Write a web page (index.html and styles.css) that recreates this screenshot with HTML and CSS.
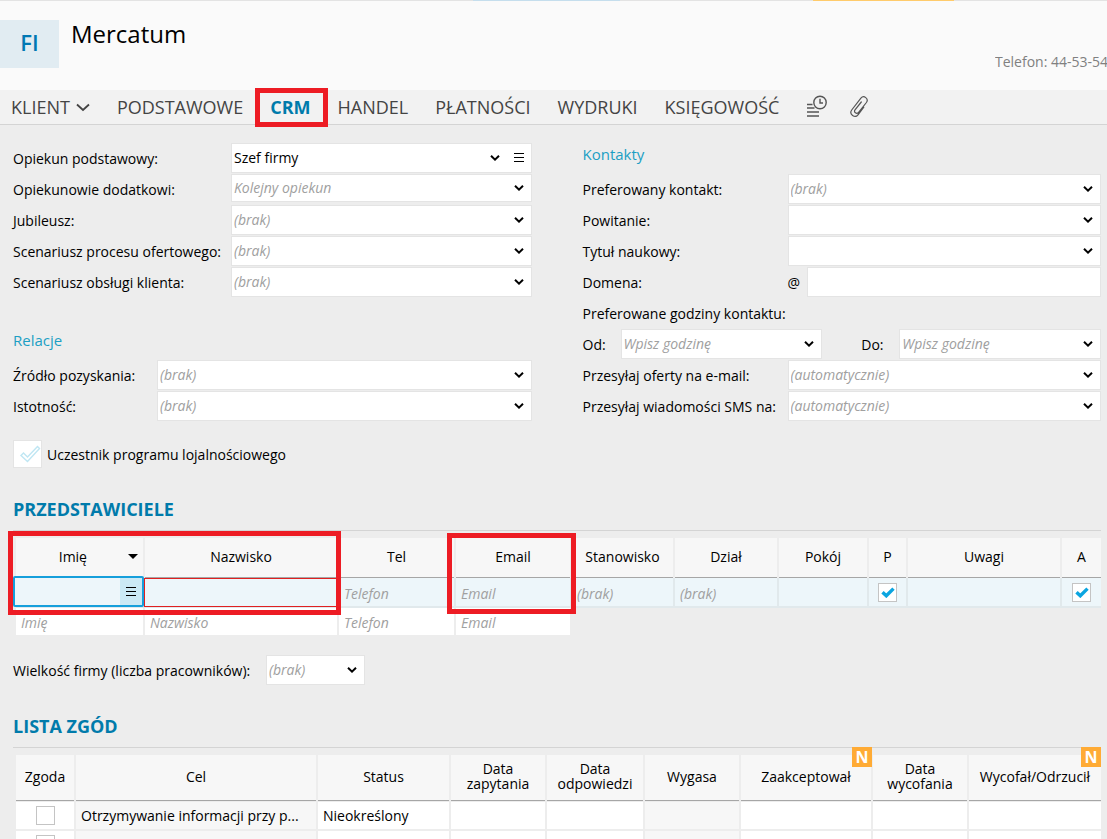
FILE: index.html
```html
<!DOCTYPE html>
<html lang="pl">
<head>
<meta charset="utf-8">
<meta name="viewport" content="width=device-width, initial-scale=1">
<title>Mercatum – CRM</title>
<link rel="stylesheet" href="styles.css">
</head>
<body>
<svg class="defs" aria-hidden="true">
  <symbol id="chev" viewBox="0 0 10 8"><path d="M1 1.8 5 5.6 9 1.8" fill="none" stroke="#000" stroke-width="2"/></symbol>
  <symbol id="menu" viewBox="0 0 10 10"><path d="M0 .5h10M0 4.500h10M0 8.500h10" stroke="#000" stroke-width="1" shape-rendering="crispEdges"/></symbol>
  <symbol id="tick" viewBox="0 0 14 12"><path d="M1.5 6.2 5.3 9.8 12.5 2.6" fill="none" stroke="#0ba5e0" stroke-width="3.4"/></symbol>
</svg>

<div class="strip"><span class="strip-blue"></span><span class="strip-orange"></span></div>
<header class="header">
  <div class="avatar">FI</div>
  <h1 class="name">Mercatum</h1>
  <p class="phone">Telefon: 44-53-54</p>
</header>

<nav class="tabs">
  <button class="tab tab-menu" type="button">KLIENT
    <svg class="tab-chev" viewBox="0 0 14 9"><path d="M1 1.5 7 7 13 1.5" fill="none" stroke="#444" stroke-width="1.8"/></svg>
  </button>
  <a class="tab" href="#">PODSTAWOWE</a>
  <a class="tab tab-active" href="#">CRM</a>
  <a class="tab" href="#">HANDEL</a>
  <a class="tab" href="#">PŁATNOŚCI</a>
  <a class="tab" href="#">WYDRUKI</a>
  <a class="tab" href="#">KSIĘGOWOŚĆ</a>
  <button class="tab-icon" type="button" aria-label="Historia">
    <svg width="22" height="24" viewBox="0 0 22 24" fill="none" stroke="#555" stroke-width="1.4"><circle cx="14" cy="7.500" r="6.2"/><path d="M14 3.8v4.2h3"/><path d="M1 9.500h5.500M1 13h7.500M1 17h12M1 21h12"/></svg>
  </button>
  <button class="tab-icon" type="button" aria-label="Załączniki">
    <svg width="20" height="24" viewBox="0 0 20 24" fill="none" stroke="#555" stroke-width="1.2" stroke-linecap="round"><path d="M14.800 12.200 9 19.800c-3 3.900-9.300-.6-6.300-4.800L11.900 3.200c2.900-3.500 8.200.5 5.500 4.300L9.600 17.300c-1.900 2.300-5.300-.1-3.600-2.500L12.300 7"/></svg>
  </button>
</nav>

<main class="content">
  <div class="columns">
    <section class="col">
      <div class="row"><label class="lbl-wide" for="op">Opiekun podstawowy:</label>
        <div class="pick pick-menu"><select id="op" class="filled"><option>Szef firmy</option></select><svg class="chev"><use href="#chev"/></svg><button class="menu-btn" type="button" aria-label="Menu"><svg class="menu-ic"><use href="#menu"/></svg></button></div></div>
      <div class="row"><label class="lbl-wide" for="od">Opiekunowie dodatkowi:</label>
        <div class="pick pick-low"><select id="od"><option>Kolejny opiekun</option></select><svg class="chev"><use href="#chev"/></svg></div></div>
      <div class="row"><label class="lbl-wide" for="ju">Jubileusz:</label>
        <div class="pick"><select id="ju"><option>(brak)</option></select><svg class="chev"><use href="#chev"/></svg></div></div>
      <div class="row"><label class="lbl-wide" for="so">Scenariusz procesu ofertowego:</label>
        <div class="pick"><select id="so"><option>(brak)</option></select><svg class="chev"><use href="#chev"/></svg></div></div>
      <div class="row"><label class="lbl-wide" for="sk">Scenariusz obsługi klienta:</label>
        <div class="pick"><select id="sk"><option>(brak)</option></select><svg class="chev"><use href="#chev"/></svg></div></div>
      <h2 class="group group-spaced">Relacje</h2>
      <div class="row"><label class="lbl-mid" for="zr">Źródło pozyskania:</label>
        <div class="pick"><select id="zr"><option>(brak)</option></select><svg class="chev"><use href="#chev"/></svg></div></div>
      <div class="row"><label class="lbl-mid" for="is">Istotność:</label>
        <div class="pick"><select id="is"><option>(brak)</option></select><svg class="chev"><use href="#chev"/></svg></div></div>
    </section>

    <section class="col">
      <h2 class="group">Kontakty</h2>
      <div class="row"><label class="lbl-right" for="pk">Preferowany kontakt:</label>
        <div class="pick"><select id="pk"><option>(brak)</option></select><svg class="chev"><use href="#chev"/></svg></div></div>
      <div class="row"><label class="lbl-right" for="po">Powitanie:</label>
        <div class="pick"><select id="po"><option></option></select><svg class="chev"><use href="#chev"/></svg></div></div>
      <div class="row"><label class="lbl-right" for="tn">Tytuł naukowy:</label>
        <div class="pick"><select id="tn"><option></option></select><svg class="chev"><use href="#chev"/></svg></div></div>
      <div class="row"><label class="lbl-right" for="dm">Domena:</label>
        <span class="at">@</span><input id="dm" class="text" type="text"></div>
      <div class="row">Preferowane godziny kontaktu:</div>
      <div class="row hours">
        <label class="lbl-hour" for="ho">Od:</label>
        <div class="pick"><select id="ho"><option>Wpisz godzinę</option></select><svg class="chev"><use href="#chev"/></svg></div>
        <label class="lbl-hour lbl-to" for="hd">Do:</label>
        <div class="pick"><select id="hd"><option>Wpisz godzinę</option></select><svg class="chev"><use href="#chev"/></svg></div>
      </div>
      <div class="row"><label class="lbl-right" for="em">Przesyłaj oferty na e-mail:</label>
        <div class="pick"><select id="em"><option>(automatycznie)</option></select><svg class="chev"><use href="#chev"/></svg></div></div>
      <div class="row"><label class="lbl-right" for="sm">Przesyłaj wiadomości SMS na:</label>
        <div class="pick"><select id="sm"><option>(automatycznie)</option></select><svg class="chev"><use href="#chev"/></svg></div></div>
    </section>
  </div>

  <label class="loyalty"><span class="big-check"><input type="checkbox"><svg viewBox="0 0 22 20"><path d="M2 11.500 4.500 9l4 4L18.500 2.500 20.500 4.500 8.500 17.500Z" fill="none" stroke="#bfe6f3" stroke-width="1.4"/></svg></span>Uczestnik programu lojalnościowego</label>

  <h2 class="section">PRZEDSTAWICIELE</h2>
  <div class="table-wrap">
    <table class="grid reps">
      <colgroup><col class="c129"><col class="c194"><col class="c117"><col class="c116"><col class="c103"><col class="c104"><col class="c90"><col class="c39"><col><col class="c39"></colgroup>
      <thead><tr>
        <th><span class="sorted">Imię<svg viewBox="0 0 10 5"><path d="M0 0h10L5 5z"/></svg></span></th>
        <th>Nazwisko</th><th>Tel</th><th>Email</th><th>Stanowisko</th><th>Dział</th><th>Pokój</th><th>P</th><th>Uwagi</th><th>A</th>
      </tr></thead>
      <tbody>
        <tr class="current">
          <td class="cell-focus"><div class="focus-box"><input type="text" aria-label="Imię"><button type="button" aria-label="Menu"><svg class="menu-ic"><use href="#menu"/></svg></button></div></td>
          <td class="cell-error"><input class="error-box" type="text" aria-label="Nazwisko"></td>
          <td><input type="text" placeholder="Telefon" aria-label="Telefon"></td>
          <td><input type="text" placeholder="Email" aria-label="Email"></td>
          <td><input type="text" placeholder="(brak)" aria-label="Stanowisko"></td>
          <td><input type="text" placeholder="(brak)" aria-label="Dział"></td>
          <td><input type="text" aria-label="Pokój"></td>
          <td><span class="check"><input type="checkbox" checked aria-label="P"><svg><use href="#tick"/></svg></span></td>
          <td><input type="text" aria-label="Uwagi"></td>
          <td><span class="check"><input type="checkbox" checked aria-label="A"><svg><use href="#tick"/></svg></span></td>
        </tr>
        <tr class="next">
          <td><input type="text" placeholder="Imię" aria-label="Nowe imię"></td>
          <td><input type="text" placeholder="Nazwisko" aria-label="Nowe nazwisko"></td>
          <td><input type="text" placeholder="Telefon" aria-label="Nowy telefon"></td>
          <td><input type="text" placeholder="Email" aria-label="Nowy email"></td>
          <td class="none" colspan="6"></td>
        </tr>
      </tbody>
    </table>
    <div class="mark mark-names"></div>
    <div class="mark mark-email"></div>
  </div>

  <div class="size"><label for="wf">Wielkość firmy (liczba pracowników):</label>
    <div class="pick"><select id="wf"><option>(brak)</option></select><svg class="chev"><use href="#chev"/></svg></div></div>

  <h2 class="section">LISTA ZGÓD</h2>
  <div class="table-wrap">
    <table class="grid consents">
      <colgroup><col class="c60"><col><col class="c133"><col class="c96"><col class="c98"><col class="c96"><col class="c132"><col class="c96"><col class="c132"></colgroup>
      <thead><tr>
        <th>Zgoda</th><th>Cel</th><th>Status</th><th>Data<br>zapytania</th><th>Data<br>odpowiedzi</th><th>Wygasa</th>
        <th>Zaakceptował<span class="badge">N</span></th><th>Data<br>wycofania</th><th>Wycofał/Odrzucił<span class="badge">N</span></th>
      </tr></thead>
      <tbody>
        <tr><td><span class="check"><input type="checkbox" aria-label="Zgoda 1"></span></td><td class="soft">Otrzymywanie informacji przy p...</td><td>Nieokreślony</td><td></td><td></td><td class="soft"></td><td></td><td></td><td></td></tr>
        <tr><td><span class="check"><input type="checkbox" aria-label="Zgoda 2"></span></td><td class="soft"></td><td></td><td></td><td></td><td class="soft"></td><td></td><td></td><td></td></tr>
      </tbody>
    </table>
  </div>
</main>
</body>
</html>
```

FILE: styles.css
```css
* { box-sizing: border-box; }

body {
  margin: 0;
  height: 100vh;
  overflow: hidden;
  background: #ededed;
  color: #000;
  font: 14px/20px "Open Sans", "Noto Sans", sans-serif;
}

h1, h2, p { margin: 0; font-weight: 400; }
input, select, button { font: inherit; color: inherit; margin: 0; padding: 0; border: 0; border-radius: 0; background: none; }
button { cursor: pointer; }
svg { display: block; }
.defs { display: none; }

/* Header */
.strip { display: flex; height: 1px; background: #e3e3e3; }
.strip-blue { width: 147px; margin-left: 473px; background: #c5deed; }
.strip-orange { width: 141px; margin-left: 193px; background: #ffcb6b; }

.header { display: flex; height: 89px; background: #fafafa; overflow: hidden; }
.avatar {
  width: 59px; height: 48px; margin-top: 19px;
  background: #e1ecf2; color: #0078b4;
  font-size: 22px; font-weight: 600; line-height: 44px; text-align: center;
}
.name { margin: 17px 0 0 12px; font-size: 24px; line-height: 32px; }
.phone { width: 112px; margin: 51px 0 0 auto; overflow: hidden; white-space: nowrap; color: #808080; }

/* Tabs */
.tabs {
  display: flex; align-items: center; gap: 27px;
  height: 35px; padding-left: 11px;
  background: #f2f2f2; border-bottom: 1px solid #d4d4d4;
}
.tab { font-size: 18px; line-height: 34px; color: #444; text-decoration: none; white-space: nowrap; }
.tab-menu { display: flex; align-items: center; gap: 6px; }
.tab-chev { width: 14px; height: 9px; }
.tab-active { position: relative; color: #007bab; font-weight: 700; }
.tab-active::after { content: ""; position: absolute; inset: -2px -17px -3px -15px; border: 5px solid #ed1c24; }
.tab-icon { margin-right: -6px; }

/* Form */
.content { padding: 18px 6px 0 13px; }
.columns { display: grid; grid-template-columns: 1fr 1fr; column-gap: 51px; }
.row { display: flex; height: 31px; line-height: 32px; }
.row > label { flex: none; white-space: nowrap; }
.lbl-wide { width: 218px; }
.lbl-mid { width: 144px; }
.lbl-right { width: 205px; }
.lbl-hour { width: 38px; }
.hours .lbl-to { margin-left: 39px; }
.group { height: 31px; color: #1c9fc4; font-size: 15px; line-height: 23px; }
.group-spaced { margin-top: 31px; }

.pick { display: grid; flex: 1; grid-template-columns: 1fr 24px; height: 30px; line-height: 20px; background: #fff; border: 1px solid #e4e4e4; }
.pick-low { height: 28px; }
.pick-menu { grid-template-columns: 1fr 24px 24px; }
.pick select {
  grid-area: 1 / 1 / 2 / 3; appearance: none; width: 100%; min-width: 0; padding-left: 2px;
  color: #a0a0a0; font-style: italic; outline: 0;
}
.pick .filled { color: #000; font-style: normal; }
.chev { grid-area: 1 / 2; place-self: center; width: 10px; height: 8px; pointer-events: none; }
.menu-btn { grid-area: 1 / 3; display: grid; place-content: center; }
.menu-ic { width: 10px; height: 10px; }
.at { width: 19px; }
.text { flex: 1; min-width: 0; height: 30px; background: #fff; border: 1px solid #e4e4e4; }

.loyalty { display: flex; gap: 5px; width: max-content; margin-top: 18px; line-height: 30px; height: 28px; }
.big-check { display: grid; width: 29px; height: 28px; background: #fff; border: 1px solid #e4e4e4; }
.big-check > * { grid-area: 1 / 1; }
.big-check input { appearance: none; }
.big-check svg { width: 22px; height: 20px; place-self: center end; pointer-events: none; }

.section {
  height: 33px; margin-top: 30px; border-bottom: 1px solid #d4d4d4;
  color: #007bab; font-size: 18px; font-weight: 700; line-height: 22px;
}

/* Tables */
.table-wrap { position: relative; padding: 7px 0 0 3px; }
.grid { width: 100%; table-layout: fixed; border-collapse: separate; border-spacing: 0; }
.grid th {
  position: relative; height: 40px; padding: 0 0 4px;
  background: #f7f7f7; background-clip: padding-box;
  border-right: 2px solid #ededed; box-shadow: inset 0 -1px #a6a6a6;
  font-weight: 400; line-height: 15px; white-space: nowrap;
}
.grid td { height: 29px; padding: 0; background-clip: padding-box; border: solid #ededed; border-width: 0 2px 2px 0; }
.grid th:last-child, .grid td:last-child { border-right-width: 0; }
.c129 { width: 129px; } .c194 { width: 194px; } .c117 { width: 117px; } .c116 { width: 116px; }
.c103 { width: 103px; } .c104 { width: 104px; } .c90 { width: 90px; } .c39 { width: 39px; }
.c60 { width: 60px; } .c132 { width: 132px; } .c133 { width: 133px; } .c96 { width: 96px; } .c98 { width: 98px; }

.sorted { display: flex; align-items: center; justify-content: flex-end; gap: 41px; padding-right: 5px; }
.sorted svg { width: 10px; height: 5px; }
.reps input[type="text"] { display: block; width: 100%; height: 27px; padding: 2px 5px 0; outline: 0; }
.reps ::placeholder { color: #a0a0a0; font-style: italic; opacity: 1; }
.reps .current td { height: 30px; background-color: #edf6fa; border-color: #e1e9ec; }
.next td { background-color: #fff; }
.next .none { background: none; }
.reps .cell-focus, .reps .cell-error { position: relative; }
.focus-box { position: absolute; inset: -2px -1px -1px -3px; display: flex; border: 2px solid #169fdb; border-radius: 2px; background: #edf6fa; }
.focus-box input { flex: 1; min-width: 0; }
.focus-box button { flex: none; display: grid; place-content: center; width: 22px; background: #cbe9f5; }
.reps .cell-error .error-box { position: absolute; inset: 0 -1px -1px -1px; width: auto; height: auto; border: 1px solid #e02020; }

.check { display: grid; width: 19px; height: 19px; margin: 0 auto; }
.check > * { grid-area: 1 / 1; }
.check input { appearance: none; width: 19px; height: 19px; background: #fff; border: 1px solid #c4c4c4; }
.check svg { width: 14px; height: 12px; place-self: center; pointer-events: none; }

.mark { position: absolute; border: 5px solid #ed1c24; pointer-events: none; }
.mark-names { left: -5px; top: 0; width: 333px; height: 84px; }
.mark-email { left: 434px; top: 2px; width: 129px; height: 81px; }

.size { display: flex; height: 30px; margin-top: 18px; line-height: 32px; }
.size label { width: 253px; }
.size .pick { flex: none; width: 99px; }

.consents th { height: 47px; border-bottom: 1px solid #ededed; }
.consents tbody td { background-color: #fff; padding-left: 5px; line-height: 27px; white-space: nowrap; overflow: hidden; }
.consents tbody td:first-child { padding: 0; }
.consents tbody .soft { background-color: #f7f7f7; }
.badge {
  position: absolute; top: -8px; right: -1px; width: 20px; height: 20px;
  background: #ffab35; color: #fff; font-size: 16px; font-weight: 700; line-height: 20px;
}
th:last-child .badge { right: 0; }
```
